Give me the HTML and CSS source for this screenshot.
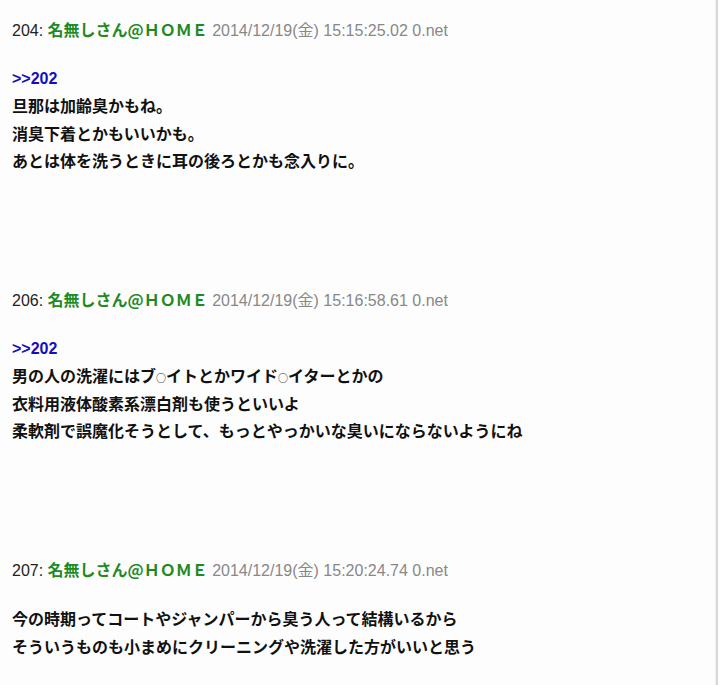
FILE: index.html
```html
<!DOCTYPE html>
<html lang="ja">
<head>
<meta charset="utf-8">
<title>thread</title>
<link rel="stylesheet" href="styles.css">
</head>
<body>
<div class="page">
  <div class="post">
    <div class="head"><span class="num">204</span>: <span class="name">名無しさん@ＨＯＭＥ</span> <span class="date">2014/12/19(金) 15:15:25.02 0.net</span></div>
    <div class="body">
      <div class="anchor">&gt;&gt;202</div>
      <div>旦那は加齢臭かもね。</div>
      <div>消臭下着とかもいいかも。</div>
      <div>あとは体を洗うときに耳の後ろとかも念入りに。</div>
    </div>
  </div>
  <div class="post">
    <div class="head"><span class="num">206</span>: <span class="name">名無しさん@ＨＯＭＥ</span> <span class="date">2014/12/19(金) 15:16:58.61 0.net</span></div>
    <div class="body">
      <div class="anchor">&gt;&gt;202</div>
      <div>男の人の洗濯にはブ<span class="circ">○</span>イトとかワイド<span class="circ">○</span>イターとかの</div>
      <div>衣料用液体酸素系漂白剤も使うといいよ</div>
      <div>柔軟剤で誤魔化そうとして、もっとやっかいな臭いにならないようにね</div>
    </div>
  </div>
  <div class="post">
    <div class="head"><span class="num">207</span>: <span class="name">名無しさん@ＨＯＭＥ</span> <span class="date">2014/12/19(金) 15:20:24.74 0.net</span></div>
    <div class="body">
      <div>今の時期ってコートやジャンパーから臭う人って結構いるから</div>
      <div>そういうものも小まめにクリーニングや洗濯した方がいいと思う</div>
    </div>
  </div>
</div>
</body>
</html>
```
FILE: styles.css
```css
html, body {
  margin: 0;
  padding: 0;
  background: #fdfdfd;
}
.page {
  width: 716px;
  height: 685px;
  overflow: hidden;
  border-right: 1px solid #f0f0f0;
  box-shadow: 2px 0 0 #d8d8d8;
  padding: 17px 0 0 12px;
  box-sizing: border-box;
}
.post {
  margin-bottom: 113px;
}
.head {
  height: 28px;
  font-family: "Liberation Sans", Arial, "Noto Sans CJK JP", sans-serif;
  font-size: 16px;
  line-height: 28px;
  color: #222;
  white-space: nowrap;
  overflow: hidden;
}
.name {
  color: #1f8a1f;
  font-weight: bold;
  font-family: "Noto Sans CJK JP", sans-serif;
  line-height: 1;
}
.date {
  color: #888;
}
.body {
  margin-top: 20px;
  font-family: "Noto Sans CJK JP", "Liberation Sans", sans-serif;
  font-weight: bold;
  font-size: 16px;
  line-height: 27.3px;
  color: #111;
  white-space: nowrap;
}
.body > div {
  height: 27.3px;
}
.anchor {
  color: #1010c0;
  font-family: "Liberation Sans", Arial, sans-serif;
}
.circ {
  font-size: 10px;
  font-weight: normal;
  line-height: 1;
}
```
